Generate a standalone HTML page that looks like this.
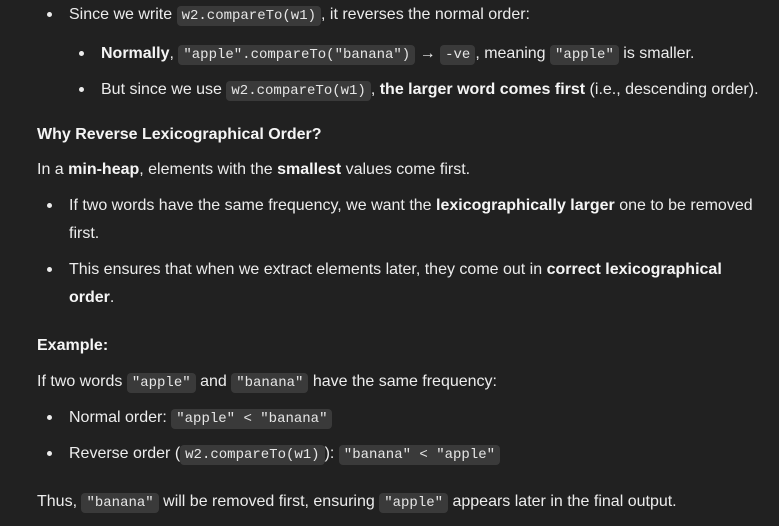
<!DOCTYPE html>
<html><head><meta charset="utf-8"><style>
html,body{margin:0;padding:0;background:#212121;width:779px;height:526px;overflow:hidden}
body{font-family:"Liberation Sans",sans-serif;font-size:16px;color:#ececec;position:relative;letter-spacing:0}
.l{position:absolute;white-space:nowrap;line-height:20px}
b{font-weight:bold;color:#f5f5f5}
code{font-family:"Liberation Mono",monospace;font-size:14px;background:#3a3a3a;border-radius:4px;padding:2px 5px;letter-spacing:0;color:#e6e6e6}
.d{position:absolute;width:5px;height:5px;border-radius:50%;background:#ececec}
</style></head><body>
<div class="d" style="left:47px;top:12px"></div>
<div class="l" style="left:69px;top:5px">Since we write <code>w2.compareTo(w1)</code>, it reverses the normal order:</div>
<div class="d" style="left:79px;top:51px"></div>
<div class="l" style="left:101px;top:44px"><b>Normally</b>, <code>"apple".compareTo("banana")</code> → <code>-ve</code>, meaning <code>"apple"</code> is smaller.</div>
<div class="d" style="left:79px;top:87px"></div>
<div class="l" style="left:101px;top:80px">But since we use <code>w2.compareTo(w1)</code>, <b>the larger word comes first</b> (i.e., descending order).</div>
<div class="l" style="left:37px;top:125px"><b>Why Reverse Lexicographical Order?</b></div>
<div class="l" style="left:37px;top:160px">In a <b>min-heap</b>, elements with the <b>smallest</b> values come first.</div>
<div class="d" style="left:47px;top:203px"></div>
<div class="l" style="left:69px;top:196px">If two words have the same frequency, we want the <b>lexicographically larger</b> one to be removed</div>
<div class="l" style="left:69px;top:224px">first.</div>
<div class="d" style="left:47px;top:267px"></div>
<div class="l" style="left:69px;top:260px">This ensures that when we extract elements later, they come out in <b>correct lexicographical</b></div>
<div class="l" style="left:69px;top:288px"><b>order</b>.</div>
<div class="l" style="left:37px;top:336px"><b>Example:</b></div>
<div class="l" style="left:37px;top:372px">If two words <code>"apple"</code> and <code>"banana"</code> have the same frequency:</div>
<div class="d" style="left:47px;top:415px"></div>
<div class="l" style="left:69px;top:408px">Normal order: <code>"apple" &lt; "banana"</code></div>
<div class="d" style="left:47px;top:451px"></div>
<div class="l" style="left:69px;top:444px">Reverse order (<code>w2.compareTo(w1)</code>): <code>"banana" &lt; "apple"</code></div>
<div class="l" style="left:37px;top:492px">Thus, <code>"banana"</code> will be removed first, ensuring <code>"apple"</code> appears later in the final output.</div>
</body></html>
